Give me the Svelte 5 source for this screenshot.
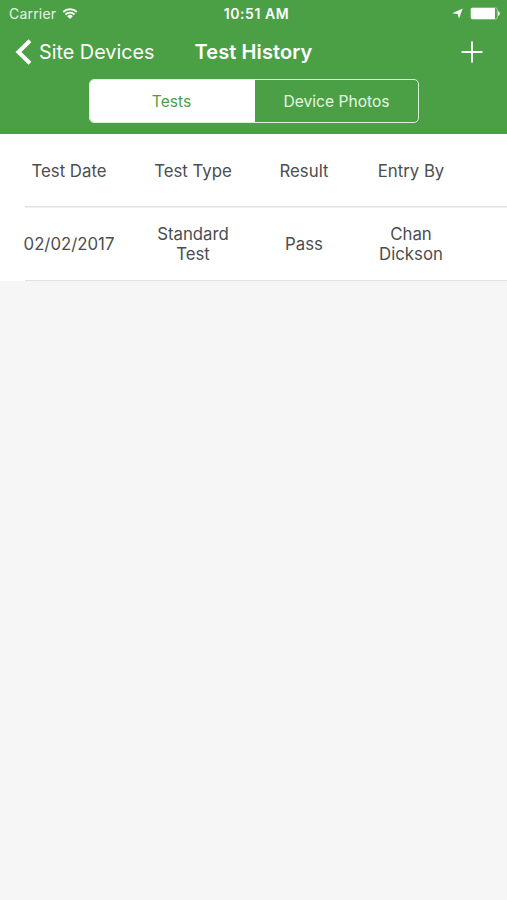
<script lang="ts">
  interface TestEntry {
    date: string;
    type: string;
    result: string;
    entryBy: string;
  }

  const tabs = ['Tests', 'Device Photos'];
  const columns = ['Test Date', 'Test Type', 'Result', 'Entry By'];
  const entries: TestEntry[] = [
    { date: '02/02/2017', type: 'Standard Test', result: 'Pass', entryBy: 'Chan Dickson' },
  ];

  let activeTab = $state('Tests');
</script>

<div class="screen">
  <header class="header">
    <div class="status">
      <div class="status-left">
        <span class="carrier">Carrier</span>
        <svg class="wifi" width="16" height="12" viewBox="0 0 16 12" aria-hidden="true">
          <path d="M1.2 4a9.8 9.8 0 0 1 13.6 0" />
          <path d="M3.5 6.5a6.4 6.4 0 0 1 9 0" />
          <path class="fill" d="M8 11.1 5.2 8.2a4 4 0 0 1 5.6 0z" />
        </svg>
      </div>
      <span class="time">10:51 AM</span>
      <div class="status-right">
        <svg width="11" height="11" viewBox="0 0 11 11" aria-hidden="true">
          <path d="M10.7.4 7 10.4 5.7 6 .2 5.2z" fill="#fff" />
        </svg>
        <svg width="31" height="13" viewBox="0 0 31 13" aria-hidden="true">
          <rect x=".9" y=".9" width="26.4" height="11.2" rx="1.8" fill="none" stroke="#b9dfb7" stroke-width=".8" />
          <rect x="1" y="1" width="24" height="11" rx="1" fill="#fff" />
          <path d="M28 4.2c2.4.6 2.4 4 0 4.6z" fill="#fff" />
        </svg>
      </div>
    </div>

    <nav class="navbar">
      <button class="back">
        <svg width="17" height="26" viewBox="0 0 17 26" aria-hidden="true">
          <path d="M15 1.8 3.4 13 15 24.2" fill="none" stroke="#fff" stroke-width="4" />
        </svg>
        <span>Site Devices</span>
      </button>
      <h1>Test History</h1>
      <button class="add" aria-label="Add">
        <svg width="22" height="22" viewBox="0 0 22 22" aria-hidden="true">
          <path d="M11 .5v21M.5 11h21" stroke="#fff" stroke-width="2" />
        </svg>
      </button>
    </nav>

    <div class="segments">
      {#each tabs as tab (tab)}
        <button class="segment" class:active={tab === activeTab} onclick={() => (activeTab = tab)}>{tab}</button>
      {/each}
    </div>
  </header>

  <div class="table">
    <div class="row">
      {#each columns as column (column)}
        <span class="cell">{column}</span>
      {/each}
    </div>
    {#each entries as entry}
      <div class="row">
        <span class="cell">{entry.date}</span>
        <span class="cell">{entry.type}</span>
        <span class="cell">{entry.result}</span>
        <span class="cell">{entry.entryBy}</span>
      </div>
    {/each}
  </div>
</div>

<style>
  :global(body) {
    background: #f6f6f6;
  }

  .screen {
    min-height: 900px;
    box-sizing: border-box;
    background: #f6f6f6;
    font-family: Inter, 'Liberation Sans', sans-serif;
    color: #4b4d50;
  }

  button {
    margin: 0;
    padding: 0;
    border: 0;
    background: none;
    font: inherit;
    color: inherit;
  }

  svg {
    display: block;
    flex: none;
  }

  .header {
    box-sizing: border-box;
    height: 134px;
    background: #4ba046;
    color: #fff;
  }

  .status {
    display: grid;
    grid-template-columns: 1fr auto 1fr;
    align-items: center;
    height: 27px;
    padding: 0 3px 0 9px;
    font-size: 14px;
  }

  .status-left,
  .status-right {
    display: flex;
    align-items: center;
  }

  .status-left {
    gap: 6px;
  }

  .carrier {
    color: #e4f5e2;
    letter-spacing: 0.2px;
  }

  .status-right {
    justify-content: flex-end;
    gap: 7px;
    padding-right: 3px;
  }

  .wifi path {
    fill: none;
    stroke: #fff;
    stroke-width: 1.8;
  }

  .wifi .fill {
    fill: #fff;
    stroke: none;
  }

  .time {
    font-weight: 600;
    letter-spacing: 0.55px;
  }

  .navbar {
    display: grid;
    grid-template-columns: 1fr auto 1fr;
    align-items: center;
    height: 50px;
    padding: 0 15px;
  }

  .back {
    display: flex;
    align-items: center;
    gap: 7px;
    font-size: 19.8px;
    white-space: nowrap;
  }

  h1 {
    margin: 0;
    font-size: 20px;
    font-weight: 600;
    letter-spacing: 0.1px;
  }

  .add {
    justify-self: end;
    margin-right: 9px;
  }

  .segments {
    display: flex;
    box-sizing: border-box;
    width: 330px;
    height: 44px;
    margin: 2px 0 0 89px;
    border: 1.5px solid #d9f3d6;
    border-radius: 5px;
    overflow: hidden;
  }

  .segment {
    flex: 1;
    font-size: 15.6px;
    color: #e4f8e1;
  }

  .segment.active {
    padding-right: 2px;
    background: #fff;
    color: #4ba046;
  }

  .table {
    background: #fff;
  }

  .row {
    display: grid;
    grid-template-columns: 124px 124px 98px 116px;
    align-items: center;
    box-sizing: border-box;
    height: 73.5px;
    padding-left: 7px;
    background: linear-gradient(#e2e2e3, #e2e2e3) 25px 100% / 100% 1.5px no-repeat;
  }

  .cell {
    padding: 0 14px;
    font-size: 16.8px;
    line-height: 20.5px;
    text-align: center;
  }
</style>
